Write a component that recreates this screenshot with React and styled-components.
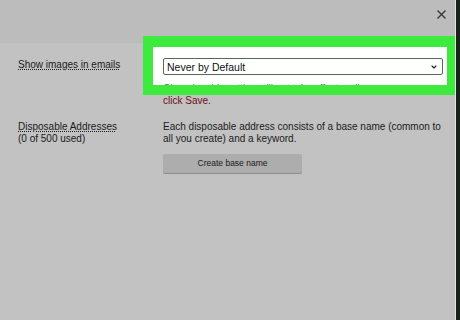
import styled, { createGlobalStyle } from "styled-components";
import { ChevronDown } from "lucide-react";

const GlobalStyle = createGlobalStyle`
  html, body {
    margin: 0;
    padding: 0;
    background: #18231a;
  }
  body {
    font-family: "Liberation Sans", Arial, sans-serif;
  }
`;

const Screen = styled.div`
  display: flex;
  width: 460px;
  height: 320px;
  overflow: hidden;
`;

const Modal = styled.div`
  width: 455px;
  height: 320px;
  background: #c2c2c2;
  border-right: 1px solid #e4e4e4;
  display: flex;
  flex-direction: column;
`;

const Header = styled.div`
  height: 43px;
  background: #bcbcbc;
  display: flex;
  justify-content: flex-end;
  align-items: flex-start;
  padding: 9px 8px 0 0;
  box-sizing: border-box;
`;

const CloseButton = styled.button`
  all: unset;
  width: 11px;
  height: 11px;
  display: flex;
  color: #3a3a3a;
`;

const Body = styled.div`
  padding: 15px 12px 0 18px;
  display: flex;
  flex-direction: column;
  gap: 14px;
`;

const Row = styled.div`
  display: grid;
  grid-template-columns: 145px 1fr;
  font-size: 10px;
  line-height: 12px;
  color: #1b1b1b;
`;

const Label = styled.div`
  padding-top: ${(p) => (p.$offset ? "1px" : "0")};
`;

const Term = styled.span`
  text-decoration: underline dotted #1b1b1b;
  text-underline-offset: 1px;
`;

const Field = styled.div`
  position: relative;
  z-index: 0;

  &::before {
    content: "";
    position: absolute;
    top: -11px;
    left: -10px;
    right: -4px;
    height: 38px;
    background: #ffffff;
    z-index: -1;
  }
  &::after {
    content: "";
    position: absolute;
    top: -22px;
    left: -20px;
    right: -12px;
    height: 59px;
    box-sizing: border-box;
    border: 10px solid #3fea3f;
    border-top-width: 11px;
    border-right-width: 8px;
    z-index: 1;
    pointer-events: none;
  }
`;

const SelectWrap = styled.div`
  position: relative;
  height: 17px;

  svg {
    position: absolute;
    right: 5px;
    top: 5px;
    color: #222;
    pointer-events: none;
  }
`;

const Select = styled.select`
  appearance: none;
  width: 100%;
  height: 17px;
  box-sizing: border-box;
  border: 1px solid #4f6d4f;
  border-radius: 2px;
  background: #fff;
  font-family: "Liberation Sans", Arial, sans-serif;
  font-size: 10.5px;
  color: #111;
  padding: 0 0 0 3px;
  margin: 0;
  outline: none;
`;

const Hint = styled.p`
  margin: 8px 0 0;
  color: #666;
`;

const SaveNote = styled.span`
  display: block;
  color: #6d1212;
`;

const Text = styled.p`
  margin: 0;
`;

const Button = styled.button`
  all: unset;
  margin-top: 9px;
  width: 139px;
  height: 19px;
  background: #adadad;
  border-radius: 2px;
  box-shadow: 0 1px 0 #8e8e8e;
  font-family: "Liberation Sans", Arial, sans-serif;
  font-size: 8.5px;
  color: #1a1a1a;
  text-align: center;
  line-height: 19px;
`;

export default function App() {
  return (
    <>
      <GlobalStyle />
      <Screen>
        <Modal>
          <Header>
            <CloseButton aria-label="Close">
              <svg width="11" height="11" viewBox="0 0 11 11">
                <path d="M1.5 1.5 L9.5 9.5 M9.5 1.5 L1.5 9.5" stroke="currentColor" strokeWidth="1.4" fill="none" />
              </svg>
            </CloseButton>
          </Header>
          <Body>
            <Row>
              <Label $offset>
                <Term>Show images in emails</Term>
              </Label>
              <Field>
                <SelectWrap>
                  <Select defaultValue="never">
                    <option value="never">Never by Default</option>
                    <option value="always">Always</option>
                  </Select>
                  <ChevronDown size={8} strokeWidth={3.5} />
                </SelectWrap>
                <Hint>
                  Changing this setting will not take effect until you
                  <SaveNote>click Save.</SaveNote>
                </Hint>
              </Field>
            </Row>
            <Row>
              <Label>
                <Term>Disposable Addresses</Term>
                <br />
                (0 of 500 used)
              </Label>
              <div>
                <Text>
                  Each disposable address consists of a base name (common to
                  all you create) and a keyword.
                </Text>
                <Button>Create base name</Button>
              </div>
            </Row>
          </Body>
        </Modal>
      </Screen>
    </>
  );
}
